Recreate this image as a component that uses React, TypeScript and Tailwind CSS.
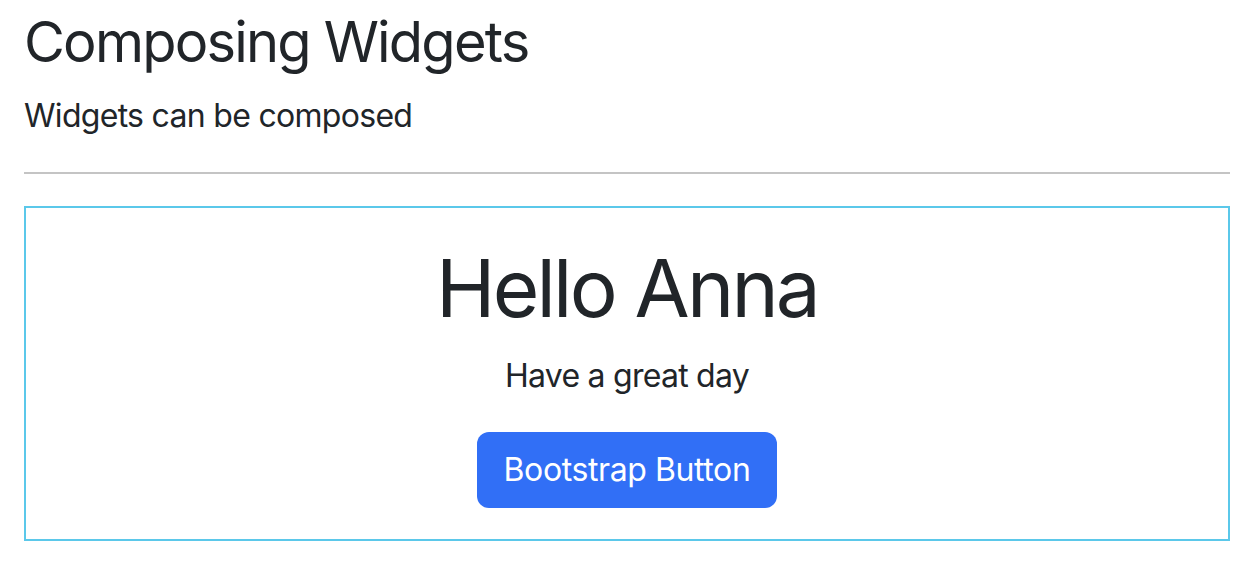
export default function App() {
  return (
    <div className="min-h-screen bg-white pl-6 pr-[22px] pt-[9px] font-['Inter','Helvetica_Neue','Liberation_Sans',sans-serif] text-[#212529]">
      <h3 className="text-[56px] leading-[67px] font-normal tracking-[-1.8px]">Composing Widgets</h3>
      <p className="mt-4 text-[32px] leading-[48px] tracking-[-0.7px]">Widgets can be composed</p>

      <hr className="mt-8 mb-8 border-0 border-t-2 border-[#c4c4c4]" />

      {/* widget card */}
      <div className="flex flex-col items-center border-2 border-[#5bc8ea] pt-8 pb-[31px]">
        <h1 className="text-[80px] leading-[96px] font-normal tracking-[-2.8px]">Hello Anna</h1>
        <p className="mt-4 text-[32px] leading-[48px] tracking-[-0.75px]">Have a great day</p>
        <button className="mt-8 rounded-xl bg-[#316ff6] px-[27px] py-[14px] text-[32px] leading-[48px] tracking-[-0.4px] text-white">
          Bootstrap Button
        </button>
      </div>
    </div>
  );
}
